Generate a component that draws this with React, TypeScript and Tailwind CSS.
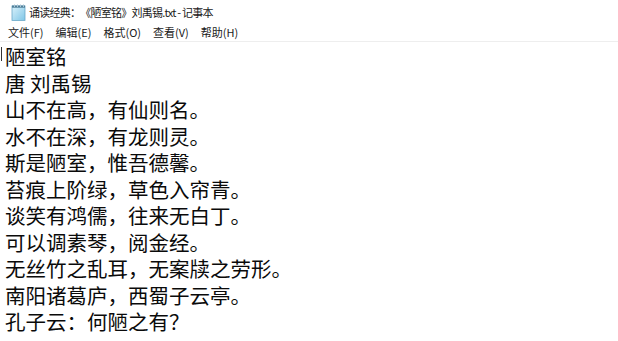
import React from "react";

const lines = [
  "陋室铭",
  "唐 刘禹锡",
  "山不在高，有仙则名。",
  "水不在深，有龙则灵。",
  "斯是陋室，惟吾德馨。",
  "苔痕上阶绿，草色入帘青。",
  "谈笑有鸿儒，往来无白丁。",
  "可以调素琴，阅金经。",
  "无丝竹之乱耳，无案牍之劳形。",
  "南阳诸葛庐，西蜀子云亭。",
  "孔子云：何陋之有？",
];

const menus = ["文件(F)", "编辑(E)", "格式(O)", "查看(V)", "帮助(H)"];

function NotepadIcon() {
  return (
    <svg width="15" height="17" viewBox="0 0 15 17">
      <defs>
        <linearGradient id="pg" x1="0" y1="0" x2="1" y2="1">
          <stop offset="0" stopColor="#d9f1fb" />
          <stop offset="1" stopColor="#7fc6e6" />
        </linearGradient>
      </defs>
      <rect x="1" y="2" width="13" height="14.5" fill="url(#pg)" stroke="#6aa9c8" strokeWidth="0.8" />
      <rect x="1" y="1.5" width="13" height="2.2" fill="#4f7f99" />
      <g fill="#a9c4d3">
        <rect x="3" y="0.5" width="1" height="2.5" />
        <rect x="6" y="0.5" width="1" height="2.5" />
        <rect x="9" y="0.5" width="1" height="2.5" />
        <rect x="12" y="0.5" width="1" height="2.5" />
      </g>
    </svg>
  );
}

export default function App() {
  return (
    <div
      className="relative w-[618px] h-[341px] bg-white overflow-hidden flex flex-col text-black"
      style={{ fontFamily: '"Noto Sans CJK SC", "Noto Sans", sans-serif' }}
    >
      <div className="h-[24px] flex items-center pl-[11px] gap-[3px]">
        <NotepadIcon />
        <span className="text-[11px] leading-none tracking-[-0.75px] text-[#1a1a1a] whitespace-pre [text-spacing-trim:space-all]">
          诵读经典：《陋室铭》刘禹锡.txt - 记事本
        </span>
      </div>
      <div className="h-[18px] flex items-center pl-[8px] gap-[12px] border-b border-[#eeeeee]">
        {menus.map((m) => (
          <span key={m} className="text-[11px] leading-none text-[#1a1a1a]">
            {m}
          </span>
        ))}
      </div>
      <div className="relative flex-1 pl-[5px] pt-[1px]">
        <div className="absolute left-[1px] top-[5px] w-[1px] h-[14px] bg-[#333]" />
        {lines.map((l, i) => (
          <div key={i} className="text-[20.5px] leading-[26.5px] whitespace-pre text-[#0a0a0a]">
            {l}
          </div>
        ))}
      </div>
    </div>
  );
}
